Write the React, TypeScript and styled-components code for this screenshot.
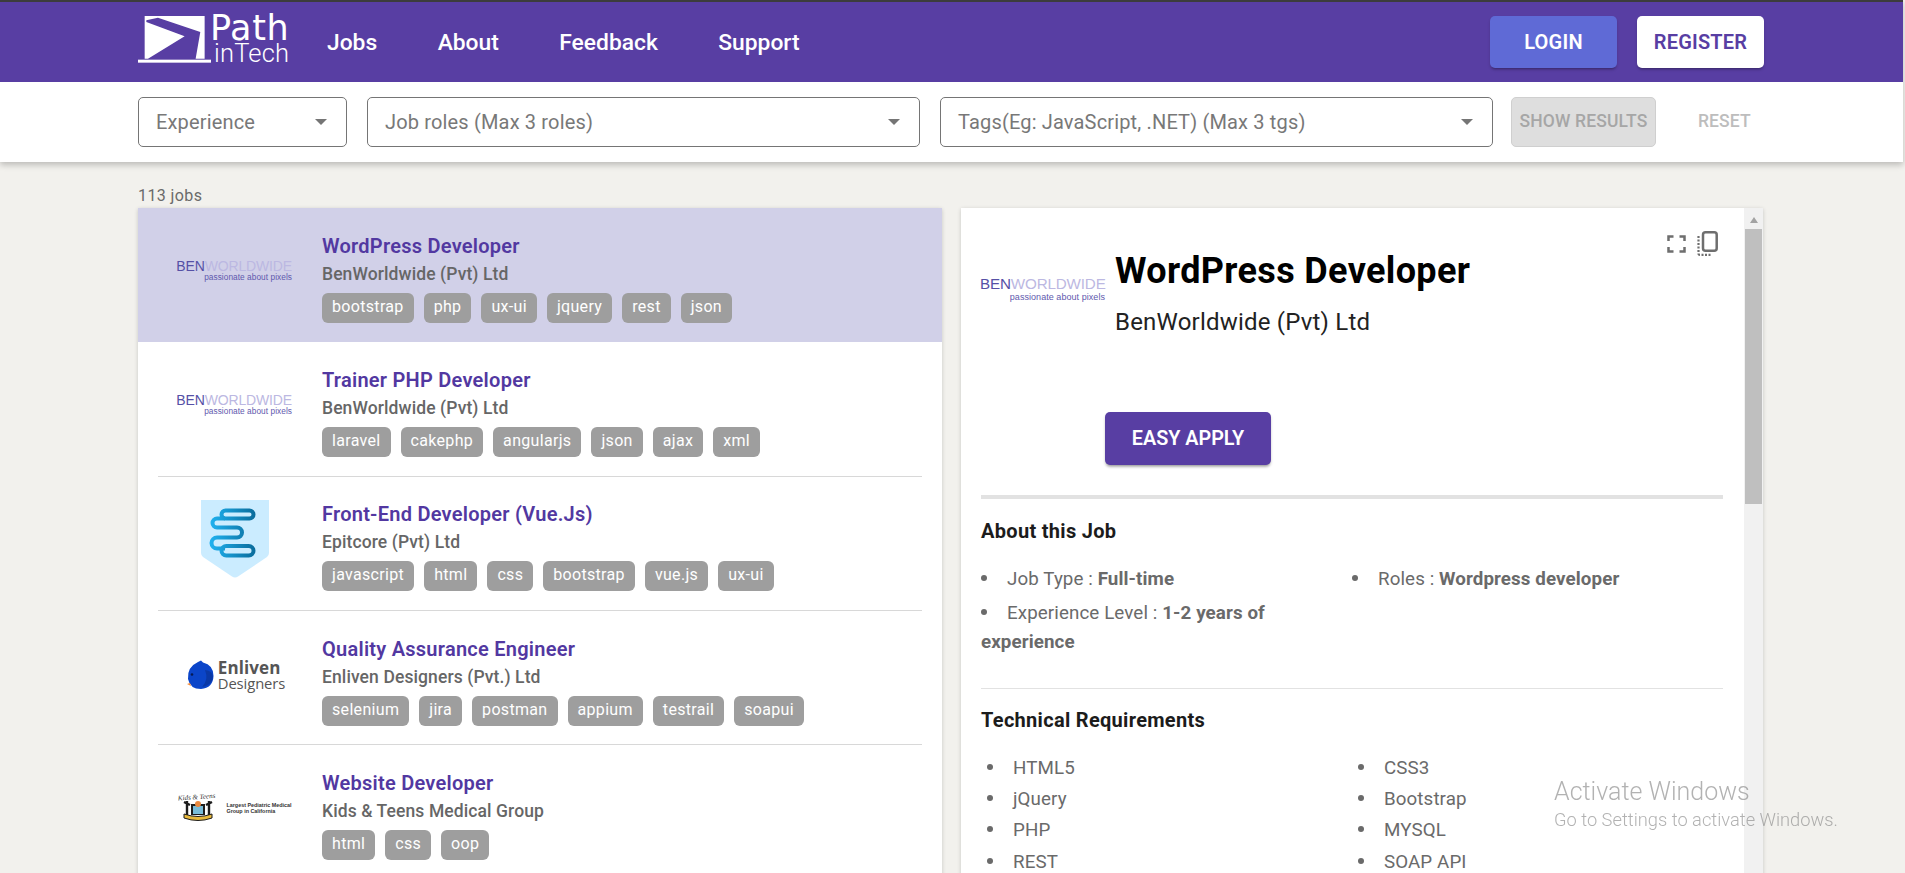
import React from "react";
import styled, { createGlobalStyle } from "styled-components";

const Global = createGlobalStyle`
  html, body { margin: 0; padding: 0; height: 100%; overflow: hidden; background: #f2f1ed; }
  body { font-family: Roboto, "Liberation Sans", sans-serif; }
  * { box-sizing: border-box; }
`;

const Page = styled.div`
  width: 1905px;
  height: 873px;
  overflow: hidden;
  background: #f2f1ed;
`;

const Top = styled.div`
  width: 1903px;
  box-shadow: 0 3px 6px rgba(0, 0, 0, 0.22);
  background: #fff;
`;

const Header = styled.header`
  height: 82px;
  background: #583ea3;
  border-top: 2px solid #3c3c3c;
  padding: 0 139px 0 138px;
  display: flex;
  align-items: center;
`;

const LogoWrap = styled.div`
  width: 152px;
  height: 50px;
  margin-top: -4px;
  display: flex;
  color: #fff;
`;

const LogoMark = styled.svg`
  width: 73.3px;
  height: 48.7px;
  flex: none;
  margin-right: 1.7px;
`;

const LogoText = styled.div`
  display: flex;
  flex-direction: column;
`;

const LogoPath = styled.span`
  font: 400 35px/28px "DejaVu Sans", sans-serif;
  letter-spacing: 0.6px;
  margin: -1px 0 1px -3px;
`;

const LogoIn = styled.span`
  font: 300 25.5px/20px Roboto, sans-serif;
  letter-spacing: 0.2px;
  margin-left: 1px;
`;

const Nav = styled.nav`
  margin-left: 37px;
  display: flex;
  gap: 60.5px;
`;

const NavLink = styled.a`
  color: #fff;
  font-size: 22.8px;
  font-weight: 500;
`;

const Right = styled.div`
  margin-left: auto;
  display: flex;
  gap: 20px;
`;

const HeadBtn = styled.button<{ $light?: boolean }>`
  width: 127px;
  height: 52px;
  border: 0;
  border-radius: 5px;
  background: ${(p) => (p.$light ? "#fff" : "#5f6ad6")};
  color: ${(p) => (p.$light ? "#583ea3" : "#fff")};
  font: 600 20px Roboto, sans-serif;
  letter-spacing: 0.2px;
  box-shadow: 0 3px 2px -2px rgba(0, 0, 0, 0.2), 0 2px 3px rgba(0, 0, 0, 0.16);
`;

const FilterBar = styled.div`
  height: 80px;
  padding: 15px 0 0 138px;
  display: flex;
  align-items: flex-start;
`;

const Select = styled.div<{ $w: number }>`
  width: ${(p) => p.$w}px;
  height: 50px;
  margin-right: 20px;
  border: 1px solid #757575;
  border-radius: 5px;
  padding: 0 19px 0 17px;
  display: flex;
  align-items: center;
  justify-content: space-between;
  color: #787878;
  font-size: 20px;
  letter-spacing: 0.16px;
`;

const Arrow = styled.i`
  width: 0;
  height: 0;
  border-left: 6.5px solid transparent;
  border-right: 6.5px solid transparent;
  border-top: 6.5px solid #757575;
`;

const ShowBtn = styled.button`
  width: 145px;
  height: 50px;
  margin-left: -2px;
  border: 1px solid #cfcfcf;
  border-radius: 5px;
  background: #dedede;
  color: #a6a6a6;
  font: 500 17.5px Roboto, sans-serif;
  letter-spacing: 0.15px;
  padding: 0 0 2px;
`;

const ResetBtn = styled.button`
  margin-left: 42px;
  width: 52px;
  height: 50px;
  border: 0;
  background: none;
  color: #bdbdbd;
  font: 500 17.5px Roboto, sans-serif;
  letter-spacing: 0.1px;
  padding: 0 0 2px;
  white-space: nowrap;
`;

const Main = styled.main`
  padding-left: 138px;
  width: 1763px;
`;

const Count = styled.div`
  height: 46px;
  padding-top: 23px;
  color: #6a6a6a;
  font-size: 16px;
  line-height: 22px;
  letter-spacing: 0.4px;
`;

const Columns = styled.div`
  display: flex;
  gap: 19px;
  align-items: flex-start;
`;

const ListPanel = styled.section`
  width: 804px;
  height: 700px;
  background: #fff;
  box-shadow: 0 1px 4px rgba(0, 0, 0, 0.18);
`;

const Row = styled.article<{ $active?: boolean }>`
  height: 134.25px;
  position: relative;
  display: flex;
  background: ${(p) => (p.$active ? "#d1d0e8" : "#fff")};
`;

const RowRule = styled.div`
  position: absolute;
  left: 20px;
  right: 20px;
  bottom: 0;
  height: 1px;
  background: #d8d8d8;
`;

const LogoCell = styled.div`
  width: 184px;
  flex: none;
  display: flex;
  align-items: center;
  justify-content: center;
  padding: 0 0 8px 10px;
`;

const RowBody = styled.div`
  padding-top: 24.9px;
  min-width: 0;
`;

const JobTitle = styled.div`
  color: #5238a1;
  font-size: 20px;
  font-weight: 600;
  line-height: 27px;
  letter-spacing: 0.25px;
`;

const Company = styled.div`
  margin-top: 1px;
  color: #666;
  font-size: 17.5px;
  font-weight: 500;
  line-height: 27px;
  letter-spacing: 0.1px;
`;

const Chips = styled.div`
  display: flex;
  gap: 10px;
  margin-top: 5px;
`;

const Chip = styled.span`
  height: 30px;
  padding: 0 10px;
  border-radius: 6px;
  background: #9e9e9e;
  color: #fff;
  font-size: 16px;
  line-height: 28px;
  letter-spacing: 0.32px;
`;

const BenLogo = styled.div<{ $w: number; $shift: number }>`
  width: ${(p) => p.$w}px;
  margin-left: ${(p) => p.$shift}px;
  text-align: right;
  white-space: nowrap;
  line-height: 1;
`;

const BenMain = styled.div<{ $s: number }>`
  font: 400 ${(p) => p.$s}px/1 "Liberation Sans", sans-serif;
  letter-spacing: -0.15px;
  & > b { font-weight: 400; color: #5650a6; }
  & > span { color: #bcb8e2; }
`;

const BenSub = styled.div<{ $s: number; $gap: number }>`
  margin-top: ${(p) => p.$gap}px;
  font: 400 ${(p) => p.$s}px/1.2 "Liberation Sans", sans-serif;
  color: #5f59ae;
  letter-spacing: 0.05px;
`;

const Ben = ({ large }: { large?: boolean }) => (
  <BenLogo $w={large ? 125 : 116} $shift={large ? -1 : -2}>
    <BenMain $s={large ? 15.2 : 14}>
      <b>BEN</b>
      <span>WORLDWIDE</span>
    </BenMain>
    <BenSub $s={large ? 9 : 8.3} $gap={large ? 1 : 0}>
      passionate about pixels
    </BenSub>
  </BenLogo>
);

const EpitcoreMark = styled.svg`
  width: 68px;
  height: 78px;
  margin-top: -1px;
`;

const Epitcore = () => (
  <EpitcoreMark viewBox="0 0 68 78">
    <defs>
      <linearGradient id="ep" gradientUnits="userSpaceOnUse" x1="10" y1="0" x2="54" y2="0">
        <stop offset="0" stopColor="#1fb0ee" />
        <stop offset="1" stopColor="#0a6c9c" />
      </linearGradient>
    </defs>
    <path d="M0 0H68V53Q68 55.500 66 57L37 76.500Q34 78.500 31 76.500L2 57Q0 55.500 0 53Z" fill="#cbecff" />
    <g fill="none" stroke="url(#ep)" strokeWidth="4">
      <rect x="20.500" y="10.500" width="32" height="8" rx="4" />
      <path d="M24 18.500H16A4.500 4.500 0 0 0 16 27.500H36A5 5 0 0 1 36 37.500H16A5.500 5.500 0 0 0 16 48.500H24" />
      <rect x="20.500" y="46" width="32" height="9.500" rx="4.750" />
    </g>
  </EpitcoreMark>
);

const EnlivenWrap = styled.div`
  display: flex;
  align-items: center;
  gap: 4px;
  margin: 2px 0 0 2px;
`;

const EnlivenText = styled.div`
  color: #555;
  font-family: "Open Sans", sans-serif;
`;

const EnlivenTop = styled.div`
  font-size: 17px;
  font-weight: 700;
  line-height: 17px;
  letter-spacing: 0.1px;
`;

const EnlivenBottom = styled.div`
  font-size: 14.8px;
  font-weight: 400;
  line-height: 15px;
  letter-spacing: -0.1px;
`;

const Enliven = () => (
  <EnlivenWrap>
    <svg width="27" height="30" viewBox="0 0 27 30">
      <path d="M11 2L14 0.500L16 2.500Q26.500 5 26.500 16Q26 28 14 29Q3 29 1 19Q0 7 11 2Z" fill="#0b45c9" />
      <path d="M18 10Q26 11 26 17Q25 25 15 27Q22 20 18 10Z" fill="#0a38a6" />
      <circle cx="5" cy="14.500" r="1.300" fill="#061a52" />
      <path d="M0 24L3 23L4 26Z" fill="#f28a3a" />
    </svg>
    <EnlivenText>
      <EnlivenTop>Enliven</EnlivenTop>
      <EnlivenBottom>Designers</EnlivenBottom>
    </EnlivenText>
  </EnlivenWrap>
);

const KidsWrap = styled.div`
  display: flex;
  align-items: center;
  gap: 8px;
`;

const KidsMark = styled.svg`
  width: 40px;
  height: 30px;
  flex: none;
`;

const KidsText = styled.div`
  color: #333;
  font: 700 5.4px/6.500px "Liberation Sans", sans-serif;
  white-space: nowrap;
`;

const Kids = () => (
  <KidsWrap>
    <KidsMark viewBox="0 0 40 30">
      <text x="0" y="6" fontSize="7" fontFamily="Liberation Serif" fontStyle="italic" fill="#333" transform="rotate(-4 20 6)">
        Kids &amp; Teens
      </text>
      <path d="M9 8V22M31 8V22M6 9L12 12M34 9L28 12" stroke="#1c1c1c" strokeWidth="2.400" fill="none" />
      <rect x="13" y="11" width="14" height="11" fill="#1c1c1c" />
      <rect x="15" y="13" width="10" height="8" fill="#79bcd8" />
      <circle cx="20" cy="11" r="3" fill="#e9883e" />
      <path d="M6 21Q20 26 34 21V25Q20 30 6 25Z" fill="#e8b93c" stroke="#1c1c1c" strokeWidth="1" />
    </KidsMark>
    <KidsText>
      Largest Pediatric Medical
      <br />
      Group in California
    </KidsText>
  </KidsWrap>
);

const DetailPanel = styled.section`
  width: 802px;
  height: 700px;
  background: #fff;
  box-shadow: 0 1px 4px rgba(0, 0, 0, 0.18);
  display: flex;
`;

const DetailBody = styled.div`
  flex: 1;
  min-width: 0;
  padding: 0 21px 0 20px;
  position: relative;
`;

const DetailTools = styled.div`
  position: absolute;
  top: 23px;
  right: 26px;
  display: flex;
  gap: 11px;
  align-items: center;
  color: #6e6e6e;
`;

const DetailHead = styled.div`
  height: 291px;
  display: grid;
  grid-template-columns: 134px 1fr;
  grid-template-rows: 204px 1fr;
  border-bottom: 4px solid #e2e2e2;
`;

const DetailLogo = styled.div`
  padding-top: 68px;
`;

const DetailTitle = styled.h1`
  margin: 0;
  padding-top: 39px;
  color: #000;
  font-size: 36px;
  font-weight: 700;
  line-height: 48px;
  letter-spacing: 0.35px;
`;

const DetailCompany = styled.div`
  color: #222;
  font-size: 24px;
  line-height: 30px;
  margin-top: 12px;
  letter-spacing: 0.2px;
`;

const ApplyBtn = styled.button`
  grid-column: 2;
  width: 166px;
  height: 53px;
  margin-left: -10px;
  border: 0;
  border-radius: 5px;
  background: #583ea3;
  color: #fff;
  font: 600 19.8px Roboto, sans-serif;
  box-shadow: 0 3px 3px -2px rgba(0, 0, 0, 0.3), 0 2px 3px rgba(0, 0, 0, 0.18);
`;

const SectionTitle = styled.h2`
  margin: 0;
  color: #1c1c1c;
  font-size: 20px;
  font-weight: 700;
  line-height: 24px;
  letter-spacing: 0.3px;
`;

const AboutSection = styled.div`
  padding-top: 20px;
  height: 190px;
  border-bottom: 1px solid #e2e2e2;
`;

const AboutGrid = styled.div`
  margin-top: 22px;
  display: grid;
  grid-template-columns: 371px 1fr;
  color: #6a6a6a;
  font-size: 18.75px;
  line-height: 29px;
  letter-spacing: 0.1px;
`;

const InfoItem = styled.div`
  margin-bottom: 4.5px;
  &::before {
    content: "";
    display: inline-block;
    width: 6px;
    height: 6px;
    border-radius: 50%;
    background: #6a6a6a;
    margin: 0 20px 4px 0;
  }
  & > b { font-weight: 700; }
`;

const TechSection = styled.div`
  padding-top: 19px;
`;

const TechGrid = styled.ul`
  margin: 20.5px 0 0;
  padding: 0;
  list-style: none;
  display: grid;
  grid-template-columns: 371px 1fr;
  grid-auto-rows: 31.35px;
  color: #6a6a6a;
  font-size: 18.75px;
  line-height: 31px;
  letter-spacing: 0.1px;
`;

const TechItem = styled.li`
  padding-left: 6px;
  &::before {
    content: "";
    display: inline-block;
    width: 6px;
    height: 6px;
    border-radius: 50%;
    background: #6a6a6a;
    margin: 0 20px 4px 0;
  }
`;

const Scrollbar = styled.div`
  width: 19px;
  flex: none;
  background: #f1f1f1;
  display: flex;
  flex-direction: column;
  align-items: center;
`;

const ScrollUp = styled.i`
  width: 0;
  height: 0;
  margin: 9px 0 4px;
  border-left: 4.500px solid transparent;
  border-right: 4.500px solid transparent;
  border-bottom: 6px solid #a3a3a3;
`;

const ScrollThumb = styled.div`
  width: 17px;
  height: 275px;
  background: #bfbfbf;
  margin-top: 2px;
`;

const Watermark = styled.div`
  position: fixed;
  left: 1554px;
  top: 777px;
  color: rgba(130, 130, 130, 0.62);
  pointer-events: none;
`;

const WaterTop = styled.div`
  font-size: 25px;
  line-height: 29px;
  font-weight: 300;
`;

const WaterBottom = styled.div`
  font-size: 18.3px;
  line-height: 24px;
  margin-top: 2px;
  font-weight: 300;
`;

const jobs = [
  { t: "WordPress Developer", c: "BenWorldwide (Pvt) Ltd", l: <Ben />, tags: ["bootstrap", "php", "ux-ui", "jquery", "rest", "json"], active: true },
  { t: "Trainer PHP Developer", c: "BenWorldwide (Pvt) Ltd", l: <Ben />, tags: ["laravel", "cakephp", "angularjs", "json", "ajax", "xml"], rule: true },
  { t: "Front-End Developer (Vue.Js)", c: "Epitcore (Pvt) Ltd", l: <Epitcore />, tags: ["javascript", "html", "css", "bootstrap", "vue.js", "ux-ui"], rule: true },
  { t: "Quality Assurance Engineer", c: "Enliven Designers (Pvt.) Ltd", l: <Enliven />, tags: ["selenium", "jira", "postman", "appium", "testrail", "soapui"], rule: true },
  { t: "Website Developer", c: "Kids & Teens Medical Group", l: <Kids />, tags: ["html", "css", "oop"] },
];

const tech = ["HTML5", "CSS3", "jQuery", "Bootstrap", "PHP", "MYSQL", "REST", "SOAP API"];

export default function App() {
  return (
    <Page>
      <Global />
      <Top>
        <Header>
          <LogoWrap>
            <LogoMark viewBox="25 44 220 146">
              <path
                fill="#fff"
                fillRule="evenodd"
                d="M45 47H225V175H45ZM50 60L85 52L212 95L198 175H55L165 108L50 65Z"
              />
              <rect x="25" y="178" width="220" height="9" fill="#fff" />
            </LogoMark>
            <LogoText>
              <LogoPath>Path</LogoPath>
              <LogoIn>inTech</LogoIn>
            </LogoText>
          </LogoWrap>
          <Nav>
            <NavLink>Jobs</NavLink>
            <NavLink>About</NavLink>
            <NavLink>Feedback</NavLink>
            <NavLink>Support</NavLink>
          </Nav>
          <Right>
            <HeadBtn>LOGIN</HeadBtn>
            <HeadBtn $light>REGISTER</HeadBtn>
          </Right>
        </Header>
        <FilterBar>
          <Select $w={209}>
            Experience
            <Arrow />
          </Select>
          <Select $w={553}>
            Job roles (Max 3 roles)
            <Arrow />
          </Select>
          <Select $w={553}>
            Tags(Eg: JavaScript, .NET) (Max 3 tgs)
            <Arrow />
          </Select>
          <ShowBtn>SHOW RESULTS</ShowBtn>
          <ResetBtn>RESET</ResetBtn>
        </FilterBar>
      </Top>
      <Main>
        <Count>113 jobs</Count>
        <Columns>
          <ListPanel>
            {jobs.map((j) => (
              <Row key={j.t} $active={j.active}>
                <LogoCell>{j.l}</LogoCell>
                <RowBody>
                  <JobTitle>{j.t}</JobTitle>
                  <Company>{j.c}</Company>
                  <Chips>
                    {j.tags.map((t) => (
                      <Chip key={t}>{t}</Chip>
                    ))}
                  </Chips>
                </RowBody>
                {j.rule && <RowRule />}
              </Row>
            ))}
          </ListPanel>
          <DetailPanel>
            <DetailBody>
              <DetailTools>
                <svg width="19" height="18" viewBox="0 0 19 18" fill="none" stroke="currentColor" strokeWidth="2.500">
                  <path d="M1.500 6V1.500H6.500M12.500 1.500H17.500V6M17.500 12V16.500H12.500M6.500 16.500H1.500V12" />
                </svg>
                <svg width="21" height="25" viewBox="0 0 21 25" fill="none" stroke="currentColor">
                  <rect x="6" y="1.300" width="13.700" height="18.500" rx="2.500" strokeWidth="2.500" />
                  <path d="M1.500 5V22.500Q1.500 23.800 3 23.800H15" strokeWidth="2.200" strokeDasharray="2 1.500" />
                </svg>
              </DetailTools>
              <DetailHead>
                <DetailLogo>
                  <Ben large />
                </DetailLogo>
                <div>
                  <DetailTitle>WordPress Developer</DetailTitle>
                  <DetailCompany>BenWorldwide (Pvt) Ltd</DetailCompany>
                </div>
                <ApplyBtn>EASY APPLY</ApplyBtn>
              </DetailHead>
              <AboutSection>
                <SectionTitle>About this Job</SectionTitle>
                <AboutGrid>
                  <InfoItem>
                    Job Type : <b>Full-time</b>
                  </InfoItem>
                  <InfoItem>
                    Roles : <b>Wordpress developer</b>
                  </InfoItem>
                  <InfoItem>
                    Experience Level : <b>1-2 years of experience</b>
                  </InfoItem>
                </AboutGrid>
              </AboutSection>
              <TechSection>
                <SectionTitle>Technical Requirements</SectionTitle>
                <TechGrid>
                  {tech.map((t) => (
                    <TechItem key={t}>{t}</TechItem>
                  ))}
                </TechGrid>
              </TechSection>
            </DetailBody>
            <Scrollbar>
              <ScrollUp />
              <ScrollThumb />
            </Scrollbar>
          </DetailPanel>
        </Columns>
      </Main>
      <Watermark>
        <WaterTop>Activate Windows</WaterTop>
        <WaterBottom>Go to Settings to activate Windows.</WaterBottom>
      </Watermark>
    </Page>
  );
}
